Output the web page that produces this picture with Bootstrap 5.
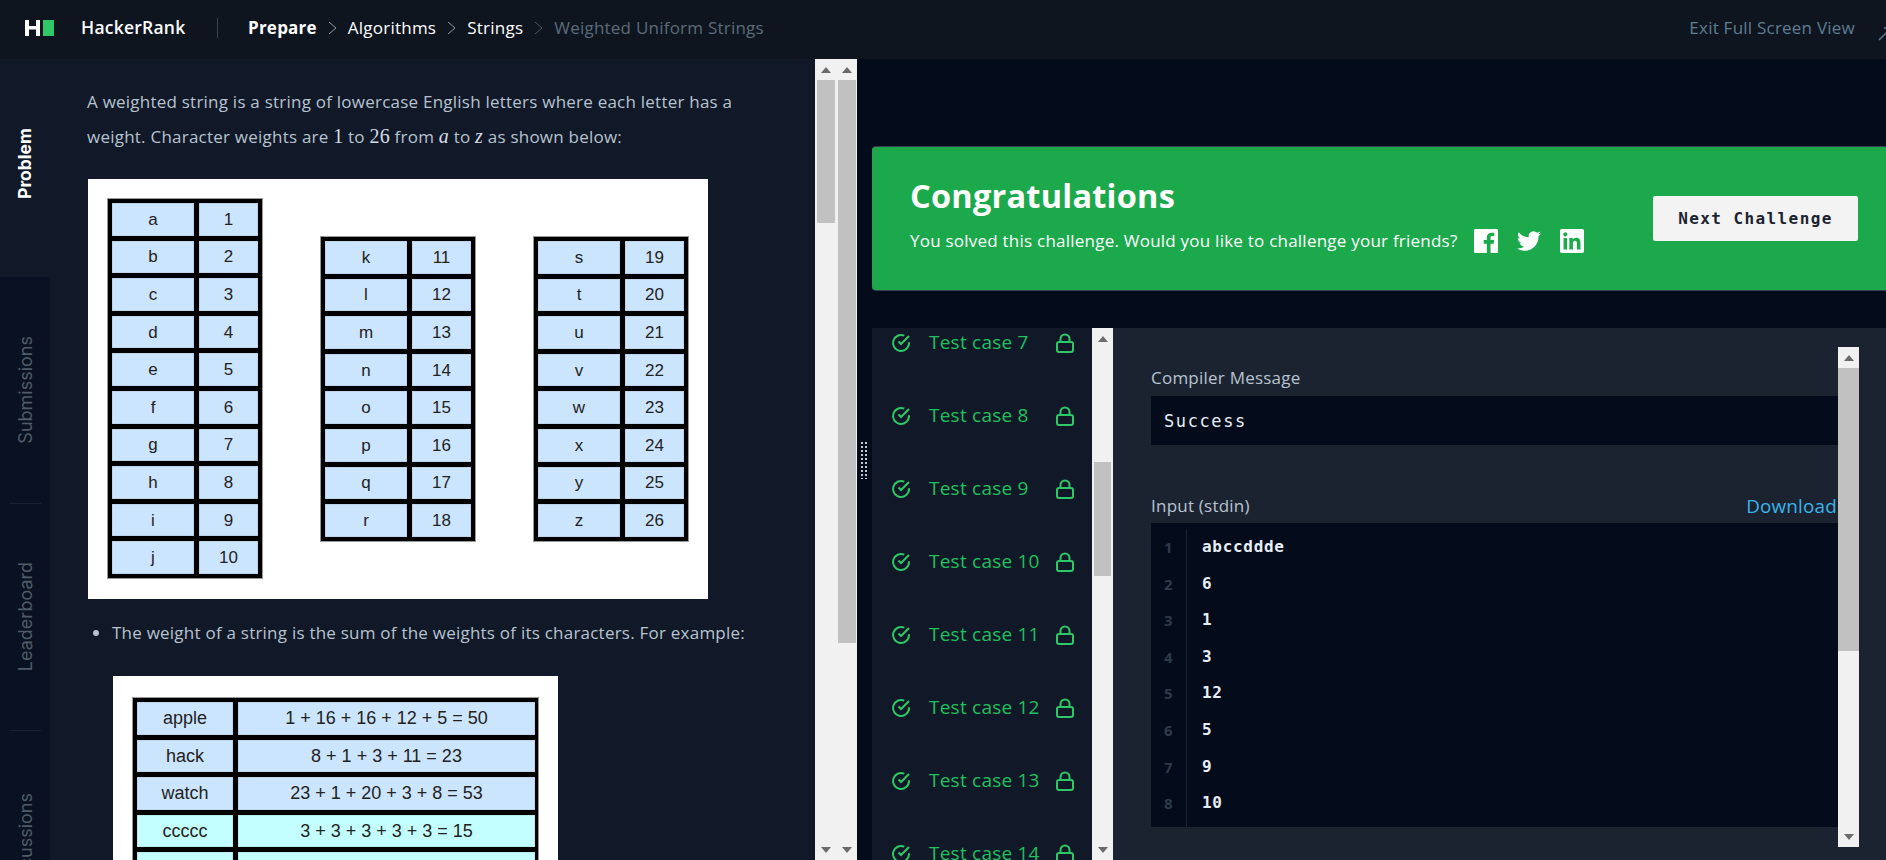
<!DOCTYPE html>
<html lang="en">
<head>
<meta charset="UTF-8">
<title>Weighted Uniform Strings | HackerRank</title>
<link href="https://cdn.jsdelivr.net/npm/bootstrap@5.3.0/dist/css/bootstrap.min.css" rel="stylesheet">
<style>
html, body { height: 100%; }
body { font-family: "Open Sans", "Liberation Sans", sans-serif; font-size: 17px; letter-spacing: .23px; background: #040b1a; overflow: hidden; }
.hr-top { height: 59px; background: #0e151f; padding-bottom: 4px; }
.hr-logo { width: 15px; height: 16px; margin-left: 25px; }
.hr-logo-box { width: 11px; height: 16px; background: #2ec866; margin-left: 3px; margin-right: 27px; }
.hr-brand { color: #fff; font-weight: 600; width: 136px; font-size: 17.5px; }
.hr-divider { width: 1px; height: 20px; background: #39424e; margin-right: 30px; }
.hr-crumb { color: #fff; }
.hr-crumb-now { color: #5d6b78; }
.hr-chev { width: 9px; height: 14px; margin: 0 11px; }
.hr-exit { color: #5f7d92; margin-right: 23px; }
.hr-exit-icon { margin-right: -6px; margin-top: 12px; }
.hr-main { height: 801px; }
.hr-side { width: 50px; background: #0a1122; }
.hr-tab { height: 226px; font-family: Inter, "Liberation Sans", sans-serif; font-size: 18px; letter-spacing: 0; color: #4f5b68; }
.hr-tab span { writing-mode: vertical-rl; transform: rotate(180deg); }
.hr-tab-on { height: 218px; background: #111827; color: #fff; font-weight: 700; font-size: 17.5px; padding-bottom: 10px; }
.hr-tab-rule { border-bottom: 1px solid #1c2330; }
.hr-tab-rule-wrap { margin: 0 9px; }
.hr-prob { width: 765px; background: #111827; color: #b7c3d0; padding: 25px 0 0 37px; line-height: 35px; overflow: hidden; }
.hr-math { font-family: "Liberation Serif", serif; font-size: 20px; color: #d5dde6; }
.hr-pic-one { width: 620px; height: 420px; background: #fff; margin: 25px 0 0 1px; padding: 19px; gap: 57px; }
.hr-grid { display: grid; background: #000; gap: 5px; padding: 5px; height: fit-content; grid-auto-rows: 32.6px; outline: 1px solid #999; outline-offset: -1px; font-family: "Liberation Sans", sans-serif; font-size: 17px; letter-spacing: 0; color: #222; line-height: 1; }
.hr-grid > div { display: flex; align-items: center; justify-content: center; background: #cce5ff; box-shadow: inset 0 0 1px #444; }
.hr-grid-letters { grid-template-columns: 82px 59px; width: 156px; }
.hr-down { margin-top: 38px; }
.hr-bullet { margin: 16px 0 0; padding-left: 25px; }
.hr-pic-two { width: 445px; height: 400px; background: #fff; margin: 26px 0 0 1px; padding: 21px 19px; }
.hr-grid-words { grid-template-columns: 96px 297px; width: 407px; font-size: 18px; }
.hr-grid-words > .hr-cyan { background: #c4ffff; }
.hr-scrolls { width: 42px; background: #f1f1f1; padding: 0 0 0 2px; gap: 3px; }
.hr-bar { width: 18px; background: #f1f1f1; }
.hr-arrow { height: 21px; flex-shrink: 0; display: flex; align-items: center; justify-content: center; }
.hr-up { width: 0; height: 0; border: 5px solid transparent; border-top: 0; border-bottom: 6px solid #6b6b6b; }
.hr-dn { width: 0; height: 0; border: 5px solid transparent; border-bottom: 0; border-top: 6px solid #6b6b6b; }
.hr-thumb { background: #c1c1c1; }
.hr-gutter { width: 15px; }
.hr-handle { width: 8px; height: 38px; margin-left: 3px; background-image: radial-gradient(#c4c8cf 1.1px, transparent 1.3px); background-size: 4px 4px; }
.hr-banner { height: 143px; margin-top: 88px; padding: 0 28px 0 38px; background: #1ba94c; border-radius: 4px 0 0 4px; box-shadow: 0 0 0 1px #39424e; color: #fff; }
.hr-congrats { font-size: 32.5px; font-weight: 700; line-height: 40px; margin-bottom: 12px; }
.hr-sub { padding-bottom: 8px; }
.hr-social { height: 24px; width: 24px; fill: #fff; }
.hr-social-next { margin-left: 19px; }
.hr-next { width: 205px; height: 45px; font-family: "DejaVu Sans Mono", monospace; font-weight: 700; font-size: 16px; letter-spacing: 1.4px; color: #1c2330; background: #f3f3f3; border: 0; border-radius: 2px; }
.hr-lower { height: 532px; margin-top: 38px; }
.hr-list { width: 220px; background: #111827; overflow: hidden; color: #1fc15e; font-size: 19px; }
.hr-case { height: 73px; margin-left: 19px; flex-shrink: 0; }
.hr-list-top { margin-top: -22px; }
.hr-case-name { width: 127px; margin-left: 18px; }
.hr-check, .hr-lock { stroke: #2ec866; fill: none; stroke-width: 2; }
.hr-white-bar { width: 21px; padding: 0 2px; background: #f1f1f1; }
.hr-result { background: #1c2330; padding: 19px 27px 0 38px; }
.hr-result-body { padding-top: 19px; color: #b7c3d0; line-height: 24px; }
.hr-message { height: 49px; background: #040b1a; color: #e5eef7; font-family: "DejaVu Sans Mono", monospace; font-size: 17px; padding-left: 13px; letter-spacing: 1.6px; margin: 6px 0 49px; }
.hr-link { color: #39b5ea; margin-right: 1px; text-decoration: none; font-size: 18.8px; }
.hr-code { height: 304px; margin-top: 5px; background: #040b1a; padding-top: 6px; }
.hr-nums { width: 36px; border-right: 1px solid #1c2330; color: #2e3a4a; text-align: center; font-weight: 700; font-size: 15px; }
.hr-lines { padding-left: 15px; color: #e5eef7; font-family: "DejaVu Sans Mono", monospace; font-weight: 700; font-size: 16px; letter-spacing: .7px; }
.hr-nums div, .hr-lines div { height: 36.6px; line-height: 36.6px; }
.hr-code-side { width: 21px; height: 500px; }
</style>
</head>
<body>
<svg class="d-none">
    <symbol id="ico-check" viewBox="0 0 20 20"><path d="M18 9.300V10a8 8 0 1 1-4.700-7.300"/><path d="M18 3l-8 8-2.500-2.500"/></symbol>
    <symbol id="ico-lock" viewBox="0 0 18 20"><rect x="1" y="9" width="16" height="10" rx="2"/><path d="M4.500 9V6a4.500 4.500 0 0 1 9 0v3"/></symbol>
</svg>

<header class="hr-top d-flex align-items-center overflow-hidden">
    <svg class="hr-logo flex-shrink-0" viewBox="0 0 15 16"><path fill="#fff" d="M0 0h4v6h7V0h4v16h-4V9.500H4V16H0z"/></svg>
    <div class="hr-logo-box flex-shrink-0"></div>
    <div class="hr-brand">HackerRank</div>
    <div class="hr-divider"></div>
    <span class="hr-crumb fw-bold">Prepare</span>
    <svg class="hr-chev" viewBox="0 0 9 14"><path d="M1 1l7 6-7 6" fill="none" stroke="#8b98a5"/></svg>
    <span class="hr-crumb">Algorithms</span>
    <svg class="hr-chev" viewBox="0 0 9 14"><path d="M1 1l7 6-7 6" fill="none" stroke="#8b98a5"/></svg>
    <span class="hr-crumb">Strings</span>
    <svg class="hr-chev" viewBox="0 0 9 14"><path d="M1 1l7 6-7 6" fill="none" stroke="#4a5662"/></svg>
    <span class="hr-crumb-now">Weighted Uniform Strings</span>
    <span class="hr-exit ms-auto">Exit Full Screen View</span>
    <svg class="hr-exit-icon flex-shrink-0" width="14" height="14" viewBox="0 0 14 14"><path d="M1 13L12 2M6 1h7v7" fill="none" stroke="#5f7d92" stroke-width="1.500"/></svg>
</header>

<div class="hr-main d-flex">
    <nav class="hr-side flex-shrink-0">
        <div class="hr-tab hr-tab-on d-flex align-items-center justify-content-center"><span>Problem</span></div>
        <div class="hr-tab d-flex align-items-center justify-content-center"><span>Submissions</span></div>
        <div class="hr-tab-rule-wrap"><div class="hr-tab-rule"></div></div>
        <div class="hr-tab d-flex align-items-center justify-content-center"><span>Leaderboard</span></div>
        <div class="hr-tab-rule-wrap"><div class="hr-tab-rule"></div></div>
        <div class="hr-tab d-flex align-items-center justify-content-center"><span>Discussions</span></div>
    </nav>

    <section class="hr-prob flex-shrink-0">
        <div>A weighted string is a string of lowercase English letters where each letter has a<br>weight. Character weights are <span class="hr-math">1</span> to <span class="hr-math">26</span> from <span class="hr-math fst-italic">a</span> to <span class="hr-math fst-italic">z</span> as shown below:</div>
        <div class="hr-pic-one d-flex">
            <div class="hr-grid hr-grid-letters" id="lettersOne"></div>
            <div class="hr-grid hr-grid-letters hr-down" id="lettersTwo"></div>
            <div class="hr-grid hr-grid-letters hr-down" id="lettersThree"></div>
        </div>
        <ul class="hr-bullet">
            <li>The weight of a string is the sum of the weights of its characters. For example:
                <div class="hr-pic-two">
                    <div class="hr-grid hr-grid-words">
                        <div>apple</div><div>1 + 16 + 16 + 12 + 5 = 50</div>
                        <div>hack</div><div>8 + 1 + 3 + 11 = 23</div>
                        <div>watch</div><div>23 + 1 + 20 + 3 + 8 = 53</div>
                        <div class="hr-cyan">ccccc</div><div class="hr-cyan">3 + 3 + 3 + 3 + 3 = 15</div>
                        <div class="hr-cyan">&nbsp;</div><div class="hr-cyan">&nbsp;</div>
                    </div>
                </div>
            </li>
        </ul>
    </section>

    <div class="hr-scrolls d-flex flex-shrink-0">
        <div class="hr-bar d-flex flex-column">
            <div class="hr-arrow"><div class="hr-up"></div></div>
            <div class="hr-thumb" style="height:143px"></div>
            <div class="hr-arrow mt-auto"><div class="hr-dn"></div></div>
        </div>
        <div class="hr-bar d-flex flex-column">
            <div class="hr-arrow"><div class="hr-up"></div></div>
            <div class="hr-thumb" style="height:563px"></div>
            <div class="hr-arrow mt-auto"><div class="hr-dn"></div></div>
        </div>
    </div>

    <div class="hr-gutter d-flex align-items-center flex-shrink-0"><div class="hr-handle"></div></div>

    <main class="flex-grow-1 overflow-hidden">
        <div class="hr-banner d-flex align-items-center justify-content-between">
            <div>
                <div class="hr-congrats">Congratulations</div>
                <div class="hr-sub d-flex align-items-center">
                    <span class="me-3">You solved this challenge. Would you like to challenge your friends?</span>
                    <svg class="hr-social" viewBox="0 0 24 24"><path d="M22.675 0H1.325C.593 0 0 .593 0 1.325v21.351C0 23.407.593 24 1.325 24H12.820v-9.294H9.692v-3.622h3.128V8.413c0-3.100 1.893-4.788 4.659-4.788 1.325 0 2.463.099 2.795.143v3.240l-1.918.001c-1.504 0-1.795.715-1.795 1.763v2.313h3.587l-.467 3.622h-3.120V24h6.116c.730 0 1.323-.593 1.323-1.325V1.325C24 .593 23.407 0 22.675 0z"/></svg>
                    <svg class="hr-social hr-social-next" viewBox="0 0 24 24"><path d="M23.953 4.570a10 10 0 01-2.825.775 4.958 4.958 0 002.163-2.723c-.951.555-2.005.959-3.127 1.184a4.920 4.920 0 00-8.384 4.482C7.690 8.095 4.067 6.130 1.640 3.162a4.822 4.822 0 00-.666 2.475c0 1.710.870 3.213 2.188 4.096a4.904 4.904 0 01-2.228-.616v.060a4.923 4.923 0 003.946 4.827 4.996 4.996 0 01-2.212.085 4.936 4.936 0 004.604 3.417 9.867 9.867 0 01-6.102 2.105c-.390 0-.779-.023-1.170-.067a13.995 13.995 0 007.557 2.209c9.053 0 13.998-7.496 13.998-13.985 0-.210 0-.420-.015-.630A9.935 9.935 0 0024 4.590z"/></svg>
                    <svg class="hr-social hr-social-next" viewBox="0 0 24 24"><path d="M20.447 20.452h-3.554v-5.569c0-1.328-.027-3.037-1.852-3.037-1.853 0-2.136 1.445-2.136 2.939v5.667H9.351V9h3.414v1.561h.046c.477-.900 1.637-1.850 3.370-1.850 3.601 0 4.267 2.370 4.267 5.455v6.286zM5.337 7.433c-1.144 0-2.063-.926-2.063-2.065 0-1.138.920-2.063 2.063-2.063 1.140 0 2.064.925 2.064 2.063 0 1.139-.925 2.065-2.064 2.065zm1.782 13.019H3.555V9h3.564v11.452zM22.225 0H1.771C.792 0 0 .774 0 1.729v20.542C0 23.227.792 24 1.771 24h20.451C23.200 24 24 23.227 24 22.271V1.729C24 .774 23.200 0 22.222 0h.003z"/></svg>
                </div>
            </div>
            <button type="button" class="hr-next">Next Challenge</button>
        </div>

        <div class="hr-lower d-flex">
            <div class="hr-list d-flex flex-column flex-shrink-0">
                <div class="hr-list-top" id="listaCasos"></div>
            </div>
            <div class="hr-white-bar d-flex flex-column flex-shrink-0">
                <div class="hr-arrow"><div class="hr-up"></div></div>
                <div class="hr-thumb" style="height:114px;margin-top:113px"></div>
                <div class="hr-arrow mt-auto"><div class="hr-dn"></div></div>
            </div>
            <div class="hr-result d-flex flex-grow-1">
                <div class="hr-result-body flex-grow-1">
                    <div>Compiler Message</div>
                    <div class="hr-message d-flex align-items-center">Success</div>
                    <div class="d-flex justify-content-between">
                        <span>Input (stdin)</span>
                        <a class="hr-link" href="#">Download</a>
                    </div>
                    <div class="hr-code d-flex">
                        <div class="hr-nums flex-shrink-0" id="numeros"></div>
                        <div class="hr-lines" id="lineas"></div>
                    </div>
                </div>
                <div class="hr-bar hr-code-side d-flex flex-column flex-shrink-0">
                    <div class="hr-arrow"><div class="hr-up"></div></div>
                    <div class="hr-thumb" style="height:283px"></div>
                    <div class="hr-arrow mt-auto"><div class="hr-dn"></div></div>
                </div>
            </div>
        </div>
    </main>
</div>

<script src="https://cdn.jsdelivr.net/npm/bootstrap@5.3.0/dist/js/bootstrap.bundle.min.js"></script>
<script>
    // tablas de letras
    function llenarLetras(id, letras, inicio) {
        document.getElementById(id).innerHTML = letras.split('').map((l, i) =>
            `<div>${l}</div><div>${inicio + i}</div>`).join('');
    }
    llenarLetras('lettersOne', 'abcdefghij', 1);
    llenarLetras('lettersTwo', 'klmnopqr', 11);
    llenarLetras('lettersThree', 'stuvwxyz', 19);

    // casos de prueba
    const casos = [7, 8, 9, 10, 11, 12, 13, 14];
    document.getElementById('listaCasos').innerHTML = casos.map(n => `
        <div class="hr-case d-flex align-items-center">
            <svg class="hr-check flex-shrink-0" width="20" height="20"><use href="#ico-check"/></svg>
            <span class="hr-case-name">Test case ${n}</span>
            <svg class="hr-lock flex-shrink-0" width="18" height="20"><use href="#ico-lock"/></svg>
        </div>`).join('');

    // entrada
    const entrada = ['abccddde', '6', '1', '3', '12', '5', '9', '10'];
    document.getElementById('numeros').innerHTML = entrada.map((_, i) => `<div>${i + 1}</div>`).join('');
    document.getElementById('lineas').innerHTML = entrada.map(t => `<div>${t}</div>`).join('');
</script>
</body>
</html>
